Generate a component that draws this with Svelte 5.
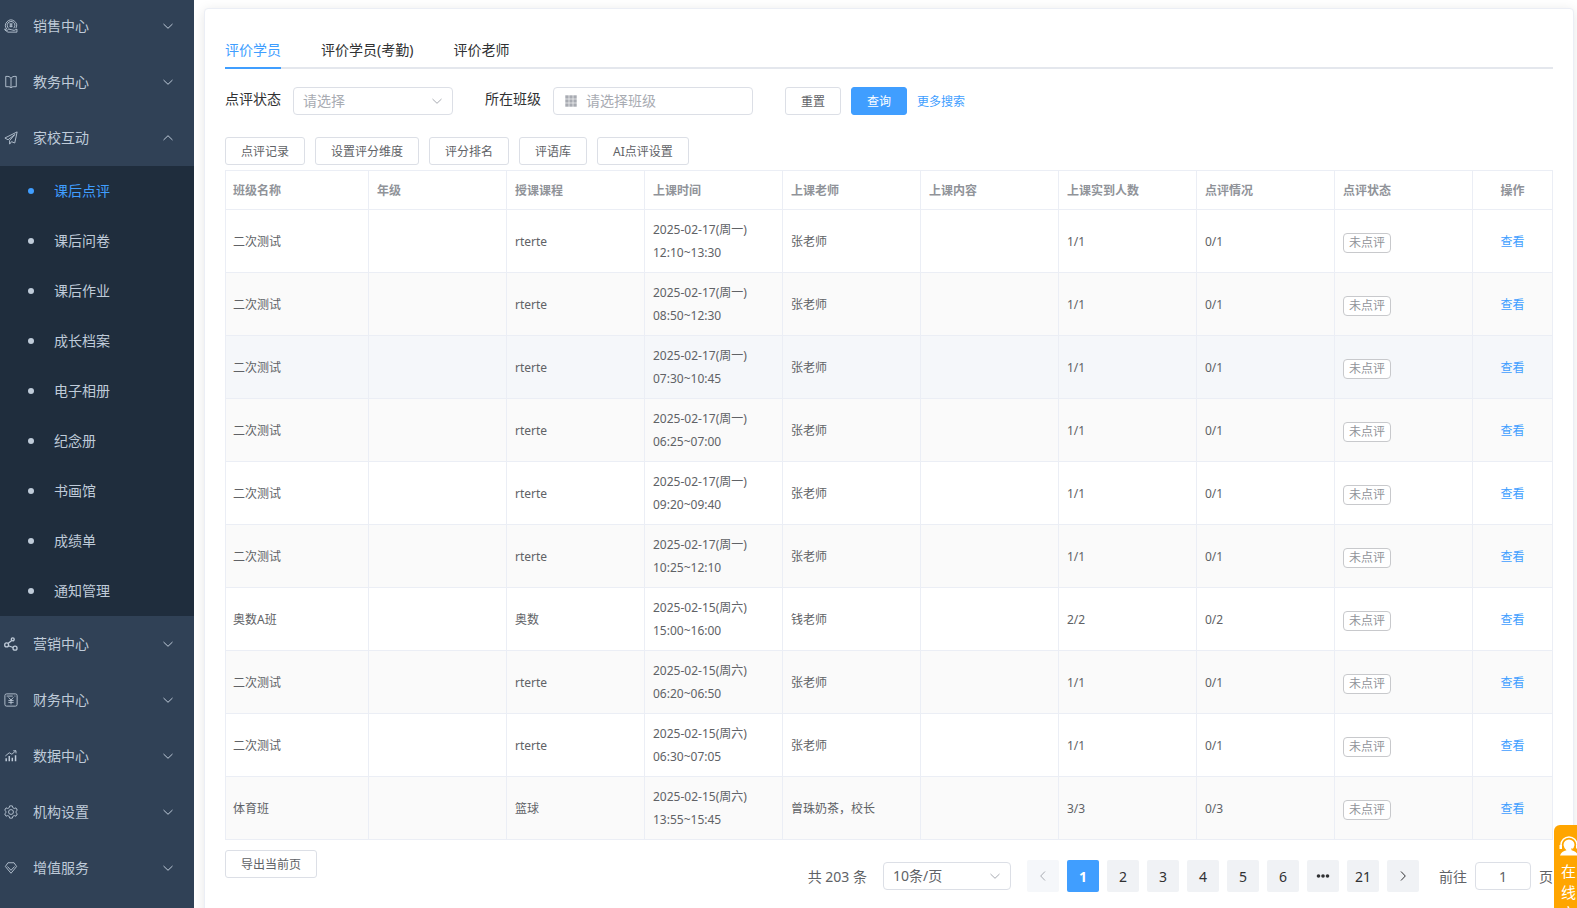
<script>
  const topMenus = [
    { icon: 'sale', name: '销售中心' },
    { icon: 'book', name: '教务中心' },
    { icon: 'send', name: '家校互动', open: true }
  ];

  const subMenus = ['课后点评', '课后问卷', '课后作业', '成长档案', '电子相册', '纪念册', '书画馆', '成绩单', '通知管理'];

  const bottomMenus = [
    { icon: 'share', name: '营销中心' },
    { icon: 'money', name: '财务中心' },
    { icon: 'chart', name: '数据中心' },
    { icon: 'gear', name: '机构设置' },
    { icon: 'gem', name: '增值服务' }
  ];

  const tabs = ['评价学员', '评价学员(考勤)', '评价老师'];
  const tools = ['点评记录', '设置评分维度', '评分排名', '评语库', 'AI点评设置'];
  const columns = ['班级名称', '年级', '授课课程', '上课时间', '上课老师', '上课内容', '上课实到人数', '点评情况', '点评状态', '操作'];

  const rows = [
    { cls: '二次测试', course: 'rterte', date: '2025-02-17(周一)', time: '12:10~13:30', teacher: '张老师', real: '1/1', done: '0/1' },
    { cls: '二次测试', course: 'rterte', date: '2025-02-17(周一)', time: '08:50~12:30', teacher: '张老师', real: '1/1', done: '0/1' },
    { cls: '二次测试', course: 'rterte', date: '2025-02-17(周一)', time: '07:30~10:45', teacher: '张老师', real: '1/1', done: '0/1' },
    { cls: '二次测试', course: 'rterte', date: '2025-02-17(周一)', time: '06:25~07:00', teacher: '张老师', real: '1/1', done: '0/1' },
    { cls: '二次测试', course: 'rterte', date: '2025-02-17(周一)', time: '09:20~09:40', teacher: '张老师', real: '1/1', done: '0/1' },
    { cls: '二次测试', course: 'rterte', date: '2025-02-17(周一)', time: '10:25~12:10', teacher: '张老师', real: '1/1', done: '0/1' },
    { cls: '奥数A班', course: '奥数', date: '2025-02-15(周六)', time: '15:00~16:00', teacher: '钱老师', real: '2/2', done: '0/2' },
    { cls: '二次测试', course: 'rterte', date: '2025-02-15(周六)', time: '06:20~06:50', teacher: '张老师', real: '1/1', done: '0/1' },
    { cls: '二次测试', course: 'rterte', date: '2025-02-15(周六)', time: '06:30~07:05', teacher: '张老师', real: '1/1', done: '0/1' },
    { cls: '体育班', course: '篮球', date: '2025-02-15(周六)', time: '13:55~15:45', teacher: '曾珠奶茶，校长', real: '3/3', done: '0/3' }
  ];

  let activeTab = $state(0);
  let activeMenu = $state('课后点评');
  let hoverRow = $state(2);
  let page = $state(1);
  let jumpPage = $state('1');
</script>

{#snippet chevron(up)}
  <svg class="chevron" class:up viewBox="0 0 12 12" aria-hidden="true">
    <path d="M1.5 4 L6 8.3 L10.5 4" />
  </svg>
{/snippet}

{#snippet menuItem(item)}
  <button class="menu-item" aria-expanded={!!item.open}>
    <svg class="menu-icon" viewBox="0 0 16 16" aria-hidden="true">
      {#if item.icon === 'sale'}
        <path d="M3.2 11.5 A6.3 6.3 0 1 1 13.6 10.5 M11 10.5 A4.4 4.4 0 1 0 5.5 10.8" />
        <path d="M6.4 4.4 L8 6.3 L9.6 4.4 M8 6.3 V9.6 M6.2 6.8 H9.8 M6.2 8.4 H9.8" />
        <path d="M1 11.2 L3.4 13.2 L5.4 11.6 L9 12.4 L11.5 13 L14.8 11.6 V15 H4.5 L1 12.6 Z" />
      {:else if item.icon === 'book'}
        <path d="M8 4 Q7 1.6 4.5 1.6 H2 V13.4 H5.5 Q7.5 13.4 8 14.8 Q8.5 13.4 10.5 13.4 H14 V1.6 H11.5 Q9 1.6 8 4 V14.5" />
      {:else if item.icon === 'send'}
        <path d="M15 1 L1 8 L4.6 10 L12.4 4 L6.4 11 V15 L8.6 12.2 L12.3 13.7 Z" />
      {:else if item.icon === 'share'}
        <g class="thick">
          <circle cx="10" cy="2.7" r="1.7" />
          <circle cx="3" cy="9" r="2.2" />
          <circle cx="12.6" cy="12.8" r="2.3" />
          <path d="M8.9 4 L4.6 7.4 M5 10 L10.4 12" />
        </g>
      {:else if item.icon === 'money'}
        <rect x="1" y="1" width="14" height="14" rx="2" />
        <path d="M3 3.5 H10 M12 3.5 H13 M5.2 5 L8 8 L10.8 5 M8 8 V13 M5 8.5 H11 M5 10.7 H11" />
      {:else if item.icon === 'chart'}
        <path d="M1.5 8 L6 4.3 L9 6 L13.5 2 M10.5 2 H13.7 V5" />
        <path d="M2.5 14 V10.5 M6 14 V8 M9.5 14 V10 M13.2 14 V7" class="bars" />
      {:else if item.icon === 'gear'}
        <path d="M6.5 1 H9.5 L10 3 L11.7 4 L13.7 3.3 L15.2 6 L13.7 7.3 V8.8 L15.2 10.1 L13.7 12.8 L11.7 12.1 L10 13 L9.5 15 H6.5 L6 13 L4.3 12.1 L2.3 12.8 L0.8 10.1 L2.3 8.8 V7.3 L0.8 6 L2.3 3.3 L4.3 4 L6 3 Z" />
        <circle cx="8" cy="8" r="2.8" />
      {:else}
        <path d="M4.5 2 H11.5 L14.4 6.3 L8 14 L1.6 6.3 Z M3.8 6.2 L8 10.6 L12.2 6.2" />
      {/if}
    </svg>
    <span>{item.name}</span>
    {@render chevron(item.open)}
  </button>
{/snippet}

<div class="layout">
  <nav class="sidebar" aria-label="主菜单">
    {#each topMenus as item}
      {@render menuItem(item)}
    {/each}
    <ul class="submenu">
      {#each subMenus as name}
        <li>
          <a href="#{name}" class:active={activeMenu === name} onclick={() => (activeMenu = name)}>
            <span>{name}</span>
          </a>
        </li>
      {/each}
    </ul>
    {#each bottomMenus as item}
      {@render menuItem(item)}
    {/each}
  </nav>

  <main class="card">
    <div class="tabs" role="tablist">
      {#each tabs as tab, i}
        <button role="tab" class="tab" class:active={activeTab === i} aria-selected={activeTab === i} onclick={() => (activeTab = i)}>{tab}</button>
      {/each}
    </div>

    <form class="filters" onsubmit={(e) => e.preventDefault()}>
      <label for="status">点评状态</label>
      <div class="select status-select">
        <select id="status" class="empty">
          <option value="">请选择</option>
          <option value="0">未点评</option>
          <option value="1">已点评</option>
        </select>
        {@render chevron(false)}
      </div>
      <label for="class-name">所在班级</label>
      <div class="class-input">
        <svg viewBox="0 0 12 12" aria-hidden="true">
          {#each [0, 1, 2] as r}
            {#each [0, 1, 2] as c}
              <rect x={c * 4 + 0.3} y={r * 4 + 0.3} width="3.4" height="3.4" />
            {/each}
          {/each}
        </svg>
        <input id="class-name" type="text" placeholder="请选择班级" />
      </div>
      <div class="filter-actions">
        <button type="reset" class="btn">重置</button>
        <button type="submit" class="btn primary">查询</button>
        <a href="#more">更多搜索</a>
      </div>
    </form>

    <div class="toolbar">
      {#each tools as tool}
        <button class="btn">{tool}</button>
      {/each}
    </div>

    <table>
      <colgroup>
        <col class="col-first" />
        {#each columns.slice(1, -1) as _}
          <col />
        {/each}
        <col class="col-last" />
      </colgroup>
      <thead>
        <tr>
          {#each columns as column}
            <th scope="col">{column}</th>
          {/each}
        </tr>
      </thead>
      <tbody>
        {#each rows as row, i}
          <tr class:hover={hoverRow === i} onmouseenter={() => (hoverRow = i)}>
            <td>{row.cls}</td>
            <td></td>
            <td>{row.course}</td>
            <td>{row.date}<br />{row.time}</td>
            <td>{row.teacher}</td>
            <td></td>
            <td>{row.real}</td>
            <td>{row.done}</td>
            <td><span class="tag">未点评</span></td>
            <td><a href="#view">查看</a></td>
          </tr>
        {/each}
      </tbody>
    </table>

    <div class="footer">
      <button class="btn">导出当前页</button>
      <div class="pagination">
        <span class="total">共 203 条</span>
        <div class="select size-select">
          <select aria-label="每页条数">
            <option>10条/页</option>
            <option>20条/页</option>
            <option>50条/页</option>
          </select>
          {@render chevron(false)}
        </div>
        <div class="pager">
          <button disabled aria-label="上一页">
            <svg viewBox="0 0 12 12"><path d="M8 1.5 L3.7 6 L8 10.5" /></svg>
          </button>
          {#each [1, 2, 3, 4, 5, 6] as n}
            <button class:active={page === n} onclick={() => (page = n)}>{n}</button>
          {/each}
          <button aria-label="更多页">
            <svg class="dots" viewBox="0 0 14 14">
              <circle cx="2.5" cy="7" r="1.8" />
              <circle cx="7" cy="7" r="1.8" />
              <circle cx="11.5" cy="7" r="1.8" />
            </svg>
          </button>
          <button class:active={page === 21} onclick={() => (page = 21)}>21</button>
          <button aria-label="下一页">
            <svg viewBox="0 0 12 12"><path d="M4 1.5 L8.3 6 L4 10.5" /></svg>
          </button>
        </div>
        <label class="jump">
          前往
          <input type="text" bind:value={jumpPage} />
          页
        </label>
      </div>
    </div>
  </main>

  <button class="service">
    <svg viewBox="0 0 20 20" aria-hidden="true">
      <path class="band" d="M2 11 V9 A8 8 0 0 1 18 9 V11" />
      <path class="fill" d="M4.5 9 A5.5 5.5 0 0 1 15.5 9 Q15 12.5 12.5 14.2 Q17.5 15 19 19.5 H1 Q2.5 15 7.5 14.2 Q5 12.5 4.5 9 Z M0.5 9 H3 V13 H0.5 Z M17 9 H19.5 V13 H17 Z" />
      <path class="mic" d="M17.5 12.5 Q16 14 12 13" />
    </svg>
    <span>在线客服</span>
  </button>
</div>

<style>
  :global(body) {
    margin: 0;
    overflow: hidden;
    background: #fff;
  }

  .layout {
    display: flex;
    height: 100vh;
    overflow: hidden;
    font-family: 'Noto Sans', 'Noto Sans CJK SC', sans-serif;
    font-size: 14px;
    color: #303133;
  }

  button,
  input,
  select {
    font-family: inherit;
    box-sizing: border-box;
  }

  button {
    cursor: pointer;
  }

  a {
    color: #409eff;
    text-decoration: none;
  }

  svg {
    fill: none;
    stroke: currentColor;
  }

  .chevron {
    width: 12px;
    height: 12px;
  }

  .chevron.up {
    transform: rotate(180deg);
  }

  /* sidebar, scrolled by a hair */
  .sidebar {
    flex: none;
    width: 194px;
    margin-top: -2px;
    background: #304156;
  }

  .menu-item {
    display: flex;
    align-items: center;
    width: 100%;
    height: 56px;
    padding: 0 20px 0 4px;
    border: 0;
    background: none;
    color: #bfcbd9;
    font-size: 14px;
    text-align: left;
  }

  .menu-item span {
    flex: 1;
    margin-left: 15px;
    padding-bottom: 2px;
  }

  .menu-icon {
    width: 14px;
    height: 14px;
  }

  .menu-icon .thick {
    stroke-width: 1.5;
  }

  .menu-icon .bars {
    stroke-width: 1.7;
  }

  .submenu {
    margin: 0;
    padding: 0;
    list-style: none;
    background: #1f2d3d;
  }

  .submenu a {
    display: flex;
    align-items: center;
    height: 50px;
    padding-left: 28px;
    color: #bfcbd9;
  }

  .submenu a::before {
    content: '';
    width: 6px;
    height: 6px;
    margin-right: 20px;
    border-radius: 50%;
    background: currentColor;
  }

  .submenu span {
    padding-bottom: 2px;
  }

  .submenu a.active {
    color: #409eff;
  }

  .card {
    flex: 1;
    min-width: 0;
    height: 100%;
    margin: 8px 3px 0 10px;
    padding: 20px;
    border: 1px solid #ebeef5;
    border-radius: 4px;
    background: #fff;
    box-shadow: 0 2px 12px rgba(0, 0, 0, 0.1);
  }

  .tabs {
    display: flex;
    gap: 40px;
    height: 40px;
    box-shadow: inset 0 -2px #e4e7ed;
  }

  .tab {
    padding: 0;
    border: 0;
    background: none;
    color: #303133;
    font-size: 14px;
  }

  .tab.active {
    color: #409eff;
    box-shadow: inset 0 -2px #409eff;
  }

  .filters {
    display: flex;
    margin-top: 18px;
  }

  .filters label {
    margin-right: 12px;
    line-height: 24px;
  }

  .select {
    position: relative;
  }

  .select select,
  .class-input,
  .jump input {
    height: 28px;
    border: 1px solid #dcdfe6;
    border-radius: 4px;
    background: #fff;
    color: #606266;
    font-size: 14px;
  }

  .select select {
    width: 100%;
    padding: 0 30px 2px 9px;
    appearance: none;
  }

  .select select.empty {
    color: #a8abb2;
  }

  .select .chevron {
    position: absolute;
    top: 8px;
    right: 10px;
    color: #a8abb2;
    pointer-events: none;
  }

  .status-select {
    width: 160px;
    margin-right: 32px;
  }

  .class-input {
    display: flex;
    align-items: center;
    box-sizing: border-box;
    width: 200px;
    margin-right: 32px;
    padding-left: 11px;
  }

  .class-input svg {
    flex: none;
    width: 12px;
    height: 12px;
    margin-right: 9px;
    fill: #a8abb2;
    stroke: none;
  }

  .class-input input {
    min-width: 0;
    flex: 1;
    padding: 0 0 2px;
    border: 0;
    outline: none;
    background: none;
    font-size: 14px;
  }

  .class-input input::placeholder {
    color: #a8abb2;
  }

  .filter-actions {
    display: flex;
    align-items: center;
    gap: 10px;
    font-size: 12px;
  }

  .btn {
    height: 28px;
    padding: 0 15px;
    border: 1px solid #dcdfe6;
    border-radius: 3px;
    background: #fff;
    color: #606266;
    font-size: 12px;
    white-space: nowrap;
  }

  .btn.primary {
    border-color: #409eff;
    background: #409eff;
    color: #fff;
  }

  .toolbar {
    display: flex;
    gap: 10px;
    margin: 22px 0 5px;
  }

  table {
    width: 100%;
    table-layout: fixed;
    border-collapse: separate;
    border-spacing: 0;
    border-top: 1px solid #ebeef5;
    font-size: 12px;
    line-height: 23px;
    color: #606266;
  }

  .col-first {
    width: 144px;
  }

  .col-last {
    width: 80px;
  }

  th,
  td {
    padding: 8px;
    border-right: 1px solid #ebeef5;
    border-bottom: 1px solid #ebeef5;
    text-align: left;
  }

  th {
    padding-bottom: 7px;
    color: #909399;
    font-weight: 700;
  }

  th:first-child,
  td:first-child {
    padding-left: 7px;
    border-left: 1px solid #ebeef5;
  }

  th:last-child,
  td:last-child {
    text-align: center;
  }

  tbody tr:nth-child(even) {
    background: #fafafa;
  }

  tbody tr.hover {
    background: #f5f7fa;
  }

  .tag {
    display: inline-block;
    padding: 0 5px;
    border: 1px solid #c8c9cc;
    border-radius: 4px;
    background: #fff;
    color: #909399;
    line-height: 18px;
    vertical-align: bottom;
  }

  .footer {
    display: flex;
    justify-content: space-between;
    align-items: flex-start;
    margin-top: 10px;
  }

  .pagination {
    display: flex;
    align-items: center;
    margin-top: 10px;
    color: #606266;
  }

  .size-select {
    width: 128px;
    margin: 0 16px;
  }

  .pager {
    display: flex;
    gap: 8px;
  }

  .pager button {
    display: flex;
    align-items: center;
    justify-content: center;
    width: 32px;
    height: 32px;
    padding: 0;
    border: 0;
    border-radius: 2px;
    background: #f0f2f5;
    color: #303133;
    font-size: 14px;
  }

  .pager button.active {
    background: #409eff;
    color: #fff;
    font-weight: 700;
  }

  .pager button:disabled {
    background: #f5f7fa;
    color: #a8abb2;
  }

  .pager svg {
    width: 12px;
    height: 12px;
  }

  .pager .dots {
    width: 14px;
    height: 14px;
    fill: currentColor;
    stroke: none;
  }

  .jump {
    display: flex;
    align-items: center;
    gap: 8px;
    margin-left: 20px;
  }

  .jump input {
    width: 56px;
    padding: 0;
    text-align: center;
  }

  /* floating customer service entry, partly off the right edge */
  .service {
    position: fixed;
    right: -6px;
    bottom: -52px;
    display: flex;
    flex-direction: column;
    align-items: center;
    width: 29px;
    height: 135px;
    padding: 11px 0 0;
    border: 0;
    border-radius: 6px 0 0 6px;
    background: #ffa500;
    color: #fff;
    font-size: 15px;
    line-height: 21px;
  }

  .service svg {
    flex: none;
    width: 20px;
    height: 20px;
    margin-bottom: 5px;
  }

  .service span {
    width: 15px;
  }

  .service .band {
    stroke-width: 1.5;
  }

  .service .fill {
    fill: #fff;
    stroke: none;
  }

  .service .mic {
    stroke: #ffa500;
  }
</style>
